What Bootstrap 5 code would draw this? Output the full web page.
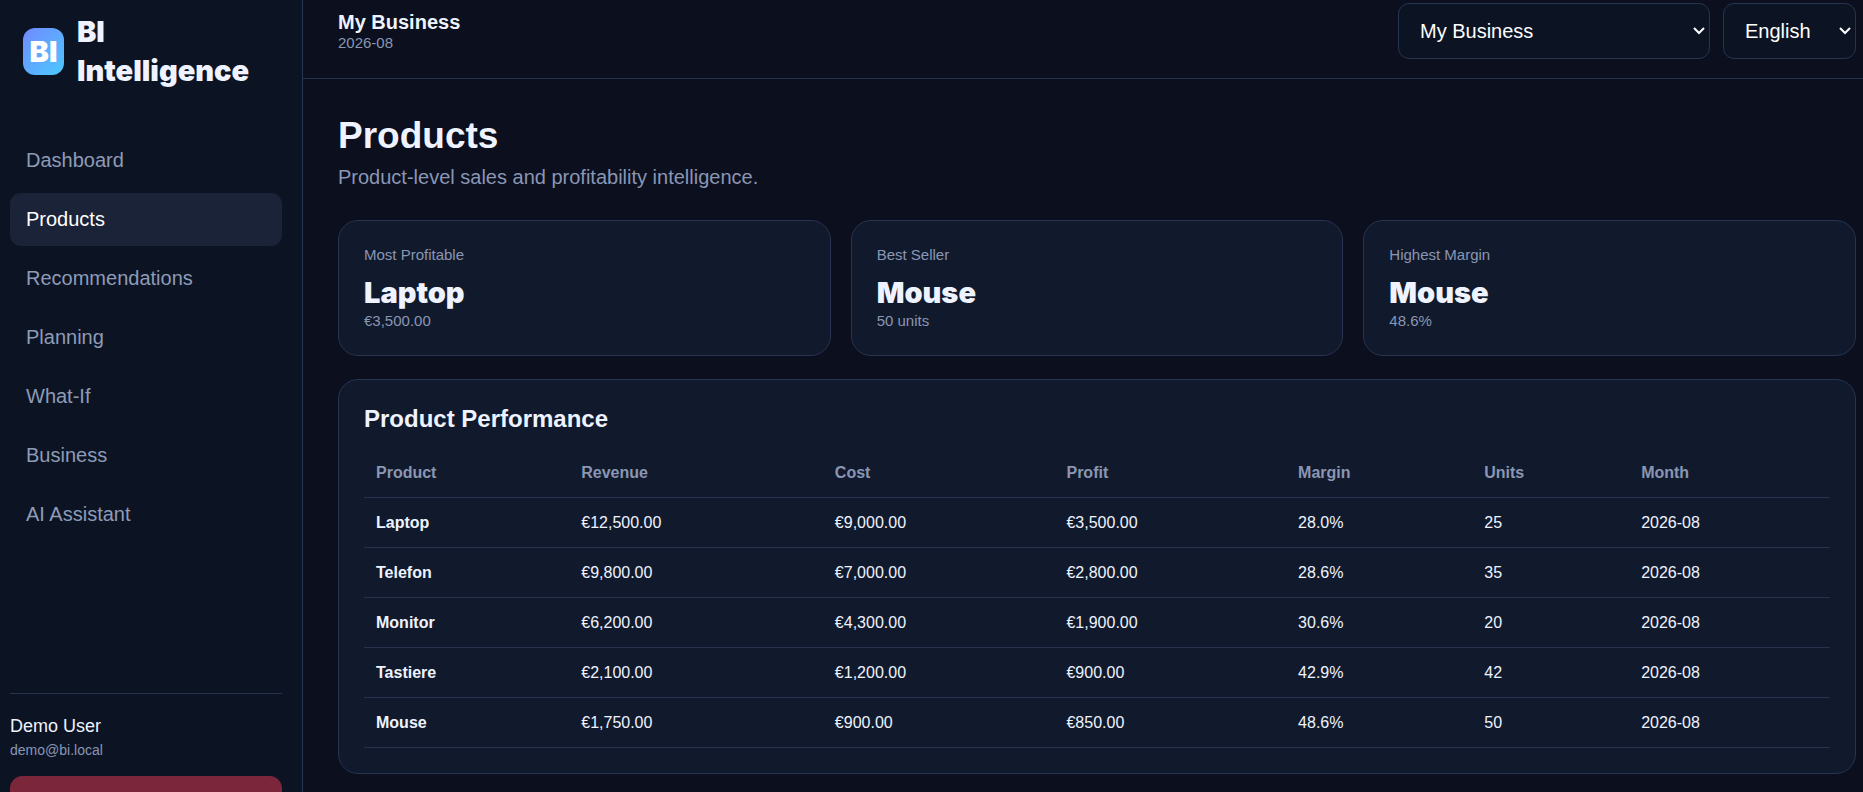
<!DOCTYPE html>
<html lang="en">
<head>
<meta charset="utf-8">
<meta name="viewport" content="width=device-width, initial-scale=1">
<title>BI Intelligence – Products</title>
<link href="https://cdn.jsdelivr.net/npm/bootstrap@5.3.0/dist/css/bootstrap.min.css" rel="stylesheet">
<style>
  :root {
    --bi-bg: #0b0f1e;
    --bi-side: #0c1424;
    --bi-panel: #111a2c;
    --bi-line: #263450;
    --bi-text: #eef3ff;
    --bi-muted: #8a96b3;
  }
  body {
    background: var(--bi-bg);
    color: var(--bi-text);
    font-family: "Liberation Sans", Arial, sans-serif;
    font-size: 20px;
    line-height: 24px;
  }
  .app-shell { height: 100vh; overflow: hidden; }
  .heavy { font-family: "Arial Black", Inter, "Liberation Sans", sans-serif; font-weight: 900; font-size: 29px; }
  .text-dim { color: var(--bi-muted); }
  .fs-note { font-size: 15px; line-height: 18px; }

  .side-panel {
    width: 303px;
    background: var(--bi-side);
    border-right: 1px solid var(--bi-line);
    padding: 12px 20px 0 10px;
  }
  .brand-row { gap: 13px; padding: 0 16px 0 13px; line-height: 39px; margin-bottom: 44px; }
  .brand-logo {
    width: 41px; height: 47px; border-radius: 12px; color: #fff;
    background: linear-gradient(135deg, #7189ff, #4cc9ff);
  }
  .side-nav { gap: 6px; }
  .side-nav .nav-link {
    color: #8e9bb7; padding: 14px 16px; line-height: 25px; border-radius: 11px;
  }
  .side-nav .nav-link.active { background: #1a2338; color: #fff; }
  .side-user { border-top: 1px solid var(--bi-line); margin-top: 152px; padding-top: 20px; }
  .user-name { font-size: 18px; }
  .user-mail { font-size: 14px; }
  .btn-logout {
    --bs-btn-color: #fff; --bs-btn-bg: #7b263b; --bs-btn-border-color: #7b263b;
    --bs-btn-hover-color: #fff; --bs-btn-hover-bg: #8d2c44; --bs-btn-hover-border-color: #8d2c44;
    margin-top: 14px; padding: 10px; font-size: 18px; line-height: 24px; font-weight: 700; border-radius: 12px;
  }

  .top-bar { height: 79px; padding: 3px 7px 0 35px; border-bottom: 1px solid #213150; }
  .top-title { padding-top: 7px; }
  .top-selects { gap: 13px; }
  .pick {
    --bs-form-select-bg-img: url("data:image/svg+xml,%3csvg xmlns='http://www.w3.org/2000/svg' viewBox='0 0 12 8'%3e%3cpath fill='none' stroke='%23fff' stroke-width='2' d='M1 1l5 5 5-5'/%3e%3c/svg%3e");
    height: 56px; padding: 0 28px 0 21px; font-size: 20px; color: #fff;
    background-color: #0c1424; border: 1px solid var(--bi-line); border-radius: 11px;
    background-position: right 4px center; background-size: 12px 8px;
  }
  .pick-business { width: 312px; }
  .pick-language { width: 133px; }

  .page-body { padding: 35px 7px 0 35px; }
  .page-title { font-size: 37px; line-height: 44px; font-weight: 700; margin: 0 0 7px; }
  .page-lead { margin-bottom: 31px; }
  .tiles { --bs-gutter-x: 20px; }
  .panel { background: var(--bi-panel); border: 1px solid var(--bi-line); border-radius: 20px; padding: 25px; }
  .tile-value { line-height: 36px; margin: 11px 0 1px; }
  .table-panel { margin-top: 23px; }
  .table-panel h2 { font-size: 24px; line-height: 28px; font-weight: 700; margin: 0 0 15px; }
  .perf-table {
    --bs-table-bg: transparent; --bs-table-color: var(--bi-text); --bs-table-border-color: #26334d;
    font-size: 16px; line-height: 25px; table-layout: fixed;
  }
  .perf-table > :not(caption) > * > * { padding: 12px; }
  .perf-table thead th { color: var(--bi-muted); }
  .w-a { width: 14%; } .w-b { width: 17.3%; } .w-c { width: 15.8%; }
  .w-d { width: 12.7%; } .w-e { width: 10.7%; }
</style>
</head>
<body>
<div class="app-shell d-flex">
  <aside class="side-panel flex-shrink-0 d-flex flex-column">
    <div class="brand-row d-flex align-items-center heavy">
      <span class="brand-logo d-flex align-items-center justify-content-center flex-shrink-0">BI</span>
      <span>BI<br>Intelligence</span>
    </div>
    <nav class="side-nav nav flex-column">
      <a class="nav-link" href="#">Dashboard</a>
      <a class="nav-link active" href="#" aria-current="page">Products</a>
      <a class="nav-link" href="#">Recommendations</a>
      <a class="nav-link" href="#">Planning</a>
      <a class="nav-link" href="#">What-If</a>
      <a class="nav-link" href="#">Business</a>
      <a class="nav-link" href="#">AI Assistant</a>
    </nav>
    <div class="side-user">
      <div class="user-name">Demo User</div>
      <div class="user-mail text-dim">demo@bi.local</div>
      <button type="button" class="btn btn-logout w-100">Sign out</button>
    </div>
  </aside>

  <div class="flex-grow-1">
    <header class="top-bar d-flex justify-content-between align-items-start">
      <div class="top-title">
        <div class="fw-bold">My Business</div>
        <div class="fs-note text-dim">2026-08</div>
      </div>
      <div class="top-selects d-flex">
        <select class="form-select pick pick-business" aria-label="Business"><option>My Business</option></select>
        <select class="form-select pick pick-language" aria-label="Language"><option>English</option></select>
      </div>
    </header>

    <main class="page-body">
      <h1 class="page-title">Products</h1>
      <p class="page-lead text-dim">Product-level sales and profitability intelligence.</p>

      <div class="row tiles">
        <div class="col-4"><div class="panel">
          <div class="fs-note text-dim">Most Profitable</div>
          <div class="tile-value heavy">Laptop</div>
          <div class="fs-note text-dim">€3,500.00</div>
        </div></div>
        <div class="col-4"><div class="panel">
          <div class="fs-note text-dim">Best Seller</div>
          <div class="tile-value heavy">Mouse</div>
          <div class="fs-note text-dim">50 units</div>
        </div></div>
        <div class="col-4"><div class="panel">
          <div class="fs-note text-dim">Highest Margin</div>
          <div class="tile-value heavy">Mouse</div>
          <div class="fs-note text-dim">48.6%</div>
        </div></div>
      </div>

      <section class="panel table-panel">
        <h2>Product Performance</h2>
        <table class="table perf-table mb-0">
          <thead>
            <tr><th class="w-a">Product</th><th class="w-b">Revenue</th><th class="w-c">Cost</th><th class="w-c">Profit</th><th class="w-d">Margin</th><th class="w-e">Units</th><th>Month</th></tr>
          </thead>
          <tbody>
            <tr><th scope="row">Laptop</th><td>€12,500.00</td><td>€9,000.00</td><td>€3,500.00</td><td>28.0%</td><td>25</td><td>2026-08</td></tr>
            <tr><th scope="row">Telefon</th><td>€9,800.00</td><td>€7,000.00</td><td>€2,800.00</td><td>28.6%</td><td>35</td><td>2026-08</td></tr>
            <tr><th scope="row">Monitor</th><td>€6,200.00</td><td>€4,300.00</td><td>€1,900.00</td><td>30.6%</td><td>20</td><td>2026-08</td></tr>
            <tr><th scope="row">Tastiere</th><td>€2,100.00</td><td>€1,200.00</td><td>€900.00</td><td>42.9%</td><td>42</td><td>2026-08</td></tr>
            <tr><th scope="row">Mouse</th><td>€1,750.00</td><td>€900.00</td><td>€850.00</td><td>48.6%</td><td>50</td><td>2026-08</td></tr>
          </tbody>
        </table>
      </section>
    </main>
  </div>
</div>
<script src="https://cdn.jsdelivr.net/npm/bootstrap@5.3.0/dist/js/bootstrap.bundle.min.js"></script>
</body>
</html>
